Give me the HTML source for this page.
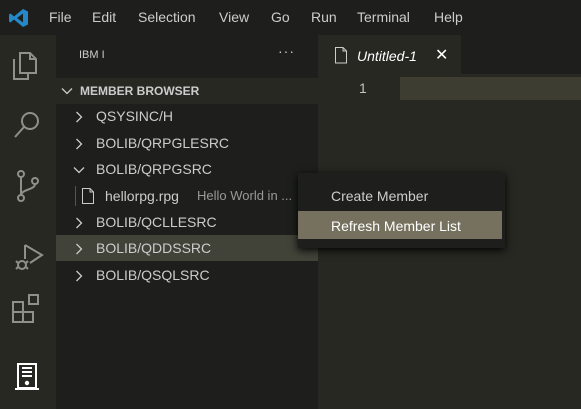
<!DOCTYPE html>
<html><head><style>
*{margin:0;padding:0;box-sizing:border-box}
body{width:581px;height:409px;overflow:hidden;background:#272822;font-family:"Liberation Sans",sans-serif;color:#ccc;position:relative}
.abs{position:absolute}
#title{left:0;top:0;width:581px;height:35px;background:#1e1f1c}
.menu{top:9px;font-size:14px;color:#ccc}
#act{left:0;top:35px;width:56px;height:374px;background:#272822}
#side{left:56px;top:35px;width:262px;height:374px;background:#1e1f1c}
.row{position:absolute;left:0;width:262px;height:26px;font-size:14px;line-height:26px;color:#ccc}
.chev{position:absolute;left:19px;top:8px}
#tabbar{left:318px;top:35px;width:263px;height:39px;background:#1e1f1c}
#tab{left:318px;top:35px;width:143px;height:40px;background:#272822}
#menu{left:298px;top:173px;width:207px;height:75px;background:#1e1f1c;box-shadow:0 2px 8px #000}
</style></head><body>
<div id="title" class="abs"></div>
<svg class="abs" style="left:8px;top:7px" width="22" height="22" viewBox="0 0 22 22"><path d="M15 2 L20 4.5 V17.5 L15 20 L6 12.5 L2.5 15.5 L1 14.5 V7.5 L2.5 6.5 L6 9.5 Z M15 6.5 L9 11 L15 15.5 Z" fill="#2489ca"/></svg>
<div class="abs menu" style="left:49px">File</div>
<div class="abs menu" style="left:92px">Edit</div>
<div class="abs menu" style="left:138px">Selection</div>
<div class="abs menu" style="left:219px">View</div>
<div class="abs menu" style="left:271px">Go</div>
<div class="abs menu" style="left:311px">Run</div>
<div class="abs menu" style="left:357px">Terminal</div>
<div class="abs menu" style="left:434px">Help</div>

<div id="act" class="abs"></div>
<svg class="abs" style="left:10px;top:45px" width="36" height="340" viewBox="0 0 36 340" fill="none" stroke="#8f908a" stroke-width="2">
<path d="M10 8 H20 L26 14 V28 H10 Z M20 8 V14 H26"/><path d="M4 14 V34 H18 V28"/>
<circle cx="20" cy="76" r="8"/><path d="M14 82 L5 92"/>
<circle cx="11" cy="129" r="3"/><circle cx="11" cy="153" r="3"/><circle cx="25" cy="136" r="3"/><path d="M11 132 V150 M25 139 C25 145 12 144 11 150"/>
<path d="M15 200 V214 M15 200 L32 210 L20 218"/><circle cx="12" cy="220" r="4"/><path d="M6 216 L8 218 M6 224 L8 222 M18 216 L16 218 M18 224 L16 222"/>
<rect x="3" y="267" width="10" height="10"/><rect x="13" y="267" width="10" height="10"/><rect x="3" y="257" width="10" height="10"/><rect x="19" y="250" width="9" height="9"/>
</svg>
<svg class="abs" style="left:14px;top:362px" width="26" height="30" viewBox="0 0 26 30" fill="none" stroke="#fff" stroke-width="2"><rect x="4" y="2" width="18" height="24"/><path d="M8 6 H18 M8 10 H18 M8 14 H18 M1 27 H25"/><circle cx="13" cy="21" r="1.2" fill="#fff"/></svg>

<div id="side" class="abs">
<div class="abs" style="left:23px;top:14px;font-size:11px;color:#ccc">IBM I</div>
<div class="abs" style="left:222px;top:8px;font-size:14px;color:#ccc;letter-spacing:1px">···</div>
<div class="row" style="top:43px;background:#272822;font-size:12px;font-weight:bold;"><svg class="chev" style="left:5px;top:9px" width="12" height="8" viewBox="0 0 12 8" fill="none" stroke="#ccc" stroke-width="1.3"><path d="M1 1.5 L6 6.5 L11 1.5"/></svg><span style="position:absolute;left:24px">MEMBER BROWSER</span></div>
<div class="row" style="top:68px"><svg class="chev" width="8" height="12" viewBox="0 0 8 12" fill="none" stroke="#ccc" stroke-width="1.3"><path d="M1.5 1 L6.5 6 L1.5 11"/></svg><span style="position:absolute;left:40px">QSYSINC/H</span></div>
<div class="row" style="top:95px"><svg class="chev" width="8" height="12" viewBox="0 0 8 12" fill="none" stroke="#ccc" stroke-width="1.3"><path d="M1.5 1 L6.5 6 L1.5 11"/></svg><span style="position:absolute;left:40px">BOLIB/QRPGLESRC</span></div>
<div class="row" style="top:121px"><svg class="chev" style="left:17px;top:10px" width="12" height="8" viewBox="0 0 12 8" fill="none" stroke="#ccc" stroke-width="1.3"><path d="M1 1.5 L6 6.5 L11 1.5"/></svg><span style="position:absolute;left:40px">BOLIB/QRPGSRC</span></div>
<div class="row" style="top:148px"><span class="abs" style="left:19px;top:3px;width:1px;height:20px;background:#555"></span>
<svg class="abs" style="left:25px;top:5px" width="14" height="16" viewBox="0 0 14 16" fill="none" stroke="#ccc"><path d="M1.5 .5 H9 L12.5 4 V15.5 H1.5 Z M9 .5 V4 H12.5"/></svg>
<span style="position:absolute;left:49px">hellorpg.rpg</span><span style="position:absolute;left:141px;font-size:13px;color:#999">Hello World in ...</span></div>
<div class="row" style="top:174px"><svg class="chev" width="8" height="12" viewBox="0 0 8 12" fill="none" stroke="#ccc" stroke-width="1.3"><path d="M1.5 1 L6.5 6 L1.5 11"/></svg><span style="position:absolute;left:40px">BOLIB/QCLLESRC</span></div>
<div class="row" style="top:200px;background:#414339"><svg class="chev" width="8" height="12" viewBox="0 0 8 12" fill="none" stroke="#ccc" stroke-width="1.3"><path d="M1.5 1 L6.5 6 L1.5 11"/></svg><span style="position:absolute;left:40px">BOLIB/QDDSSRC</span></div>
<div class="row" style="top:227px"><svg class="chev" width="8" height="12" viewBox="0 0 8 12" fill="none" stroke="#ccc" stroke-width="1.3"><path d="M1.5 1 L6.5 6 L1.5 11"/></svg><span style="position:absolute;left:40px">BOLIB/QSQLSRC</span></div>
</div>

<div id="tabbar" class="abs"></div>
<div id="tab" class="abs">
<svg class="abs" style="left:16px;top:12px" width="14" height="17" viewBox="0 0 14 17" fill="none" stroke="#ccc"><path d="M1.5 .5 H9 L12.5 4 V16 H1.5 Z M9 .5 V4 H12.5"/></svg>
<div class="abs" style="left:39px;top:13px;font-size:14px;font-style:italic;color:#fff">Untitled-1</div>
<div class="abs" style="left:117px;top:10px;font-size:16px;color:#fff">✕</div>
</div>
<div class="abs" style="left:400px;top:77px;width:181px;height:23px;background:#3e3d32"></div>
<div class="abs" style="left:359px;top:80px;font-size:14px;color:#c2c2bf">1</div>

<div id="menu" class="abs">
<div class="abs" style="left:0;top:38px;width:204px;height:28px;background:#75715e"></div>
<div class="abs" style="left:33px;top:15px;font-size:14px;color:#ccc">Create Member</div>
<div class="abs" style="left:33px;top:45px;font-size:14px;color:#fff">Refresh Member List</div>
</div>
</body></html>
